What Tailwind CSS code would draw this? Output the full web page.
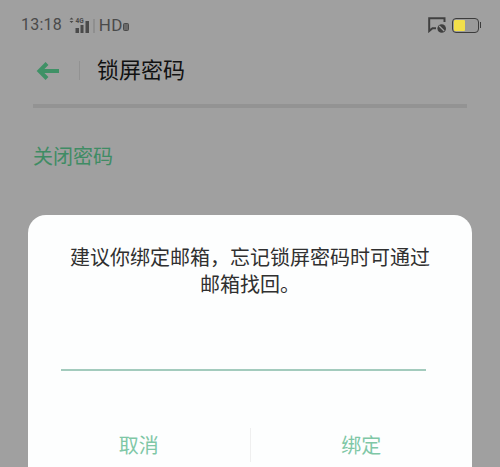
<!DOCTYPE html>
<html lang="zh">
<head>
<meta charset="utf-8">
<script src="https://cdn.jsdelivr.net/npm/@tailwindcss/browser@4"></script>
</head>
<body class="m-0">
<div class="relative w-[500px] h-[467px] overflow-hidden bg-[#a0a0a0] font-['Noto_Sans_CJK_SC','Noto_Sans',sans-serif]">
  <!-- status bar -->
  <div class="h-[50px] flex items-center justify-between pl-[21px] pr-[21px]">
    <div class="flex items-center text-[#4a4a4a]">
      <span class="font-['Roboto',sans-serif] text-[16px] leading-none tracking-[0.2px]">13:18</span>
      <svg class="ml-[7px] shrink-0" width="27" height="18" viewBox="0 0 27 18">
        <path d="M0.5 3.5 L2.5 1.5 L4.5 3.5 Z M0.5 5 L4.5 5 L2.5 7 Z" fill="#4a4a4a"/>
        <text x="6.5" y="6.5" font-size="6.5" font-weight="700" font-family="Roboto" fill="#4a4a4a">4G</text>
        <rect x="6.5" y="12" width="3.5" height="5" fill="#4a4a4a"/>
        <rect x="11.5" y="9" width="3" height="8" fill="#4a4a4a"/>
        <rect x="16.5" y="5" width="3.5" height="12" fill="#4a4a4a"/>
        <rect x="24" y="3" width="2" height="14" fill="#8f8f8f"/>
      </svg>
      <span class="ml-[3px] font-['Roboto',sans-serif] text-[17px] leading-none tracking-[0.2px]">HD</span>
      <svg class="ml-[0px] mt-[3px] shrink-0" width="6" height="8" viewBox="0 0 6 8"><rect x="0.5" y="0.5" width="5" height="7" rx="1" fill="#6a6a6a" stroke="#4a4a4a"/></svg>
    </div>
    <div class="flex items-center gap-[6px]">
      <svg width="18" height="16" viewBox="0 0 18 16">
        <path d="M16.5 5 V1.2 H1.2 V14 L4.5 11.2 H8" fill="none" stroke="#404040" stroke-width="2"/>
        <circle cx="13.7" cy="11.5" r="4.3" fill="#404040"/>
        <path d="M11.2 9 L16.2 14" stroke="#a0a0a0" stroke-width="1.2"/>
      </svg>
      <div class="relative w-[27px] h-[15px] rounded-[4px] border-[1.5px] border-[#3c3c3c] bg-[#9a9a9a] p-[1px]">
        <div class="w-[11px] h-full bg-[#f2df4a] rounded-[1px]"></div>
        <div class="absolute right-[-3px] top-[3px] w-[1.5px] h-[6px] bg-[#3c3c3c]"></div>
      </div>
    </div>
  </div>
  <!-- title -->
  <div class="h-[41px] flex items-center pl-[36px]">
    <svg class="shrink-0" width="25" height="20" viewBox="0 0 25 20">
      <path d="M11 2.5 L3.5 10 L11 17.5 M4 10 H23" fill="none" stroke="#3f9166" stroke-width="4"/>
    </svg>
    <div class="ml-[18px] w-[1px] h-[19px] bg-[#929292]"></div>
    <h1 class="ml-[17px] mb-[6px] text-[22px] leading-none font-normal text-[#111111]">锁屏密码</h1>
  </div>
  <div class="ml-[33px] mr-[33px] mt-[13px] h-[4px] bg-[#939393]"></div>
  <div class="ml-[33px] mt-[38px] text-[#3f8c64] text-[20px] leading-none">关闭密码</div>
  <!-- dialog -->
  <div class="absolute left-[28px] top-[215px] w-[444px] h-[270px] rounded-t-[18px] bg-[#fdfefe] flex flex-col items-center">
    <p class="mt-[28px] w-full text-center text-[20px] leading-[27px] text-[#303030]">建议你绑定邮箱，忘记锁屏密码时可通过<br>邮箱找回。</p>
    <div class="mt-[72px] self-start ml-[33px] w-[365px] h-[2px] bg-[#a3cbbd]"></div>
    <div class="mt-[57px] w-full flex items-center">
      <div class="flex-1 text-center text-[20px] leading-[28px] text-[#7fc7a6]">取消</div>
      <div class="w-[1px] h-[34px] bg-[#efefef]"></div>
      <div class="flex-1 text-center text-[20px] leading-[28px] text-[#7fc7a6]">绑定</div>
    </div>
  </div>
</div>
</body>
</html>
